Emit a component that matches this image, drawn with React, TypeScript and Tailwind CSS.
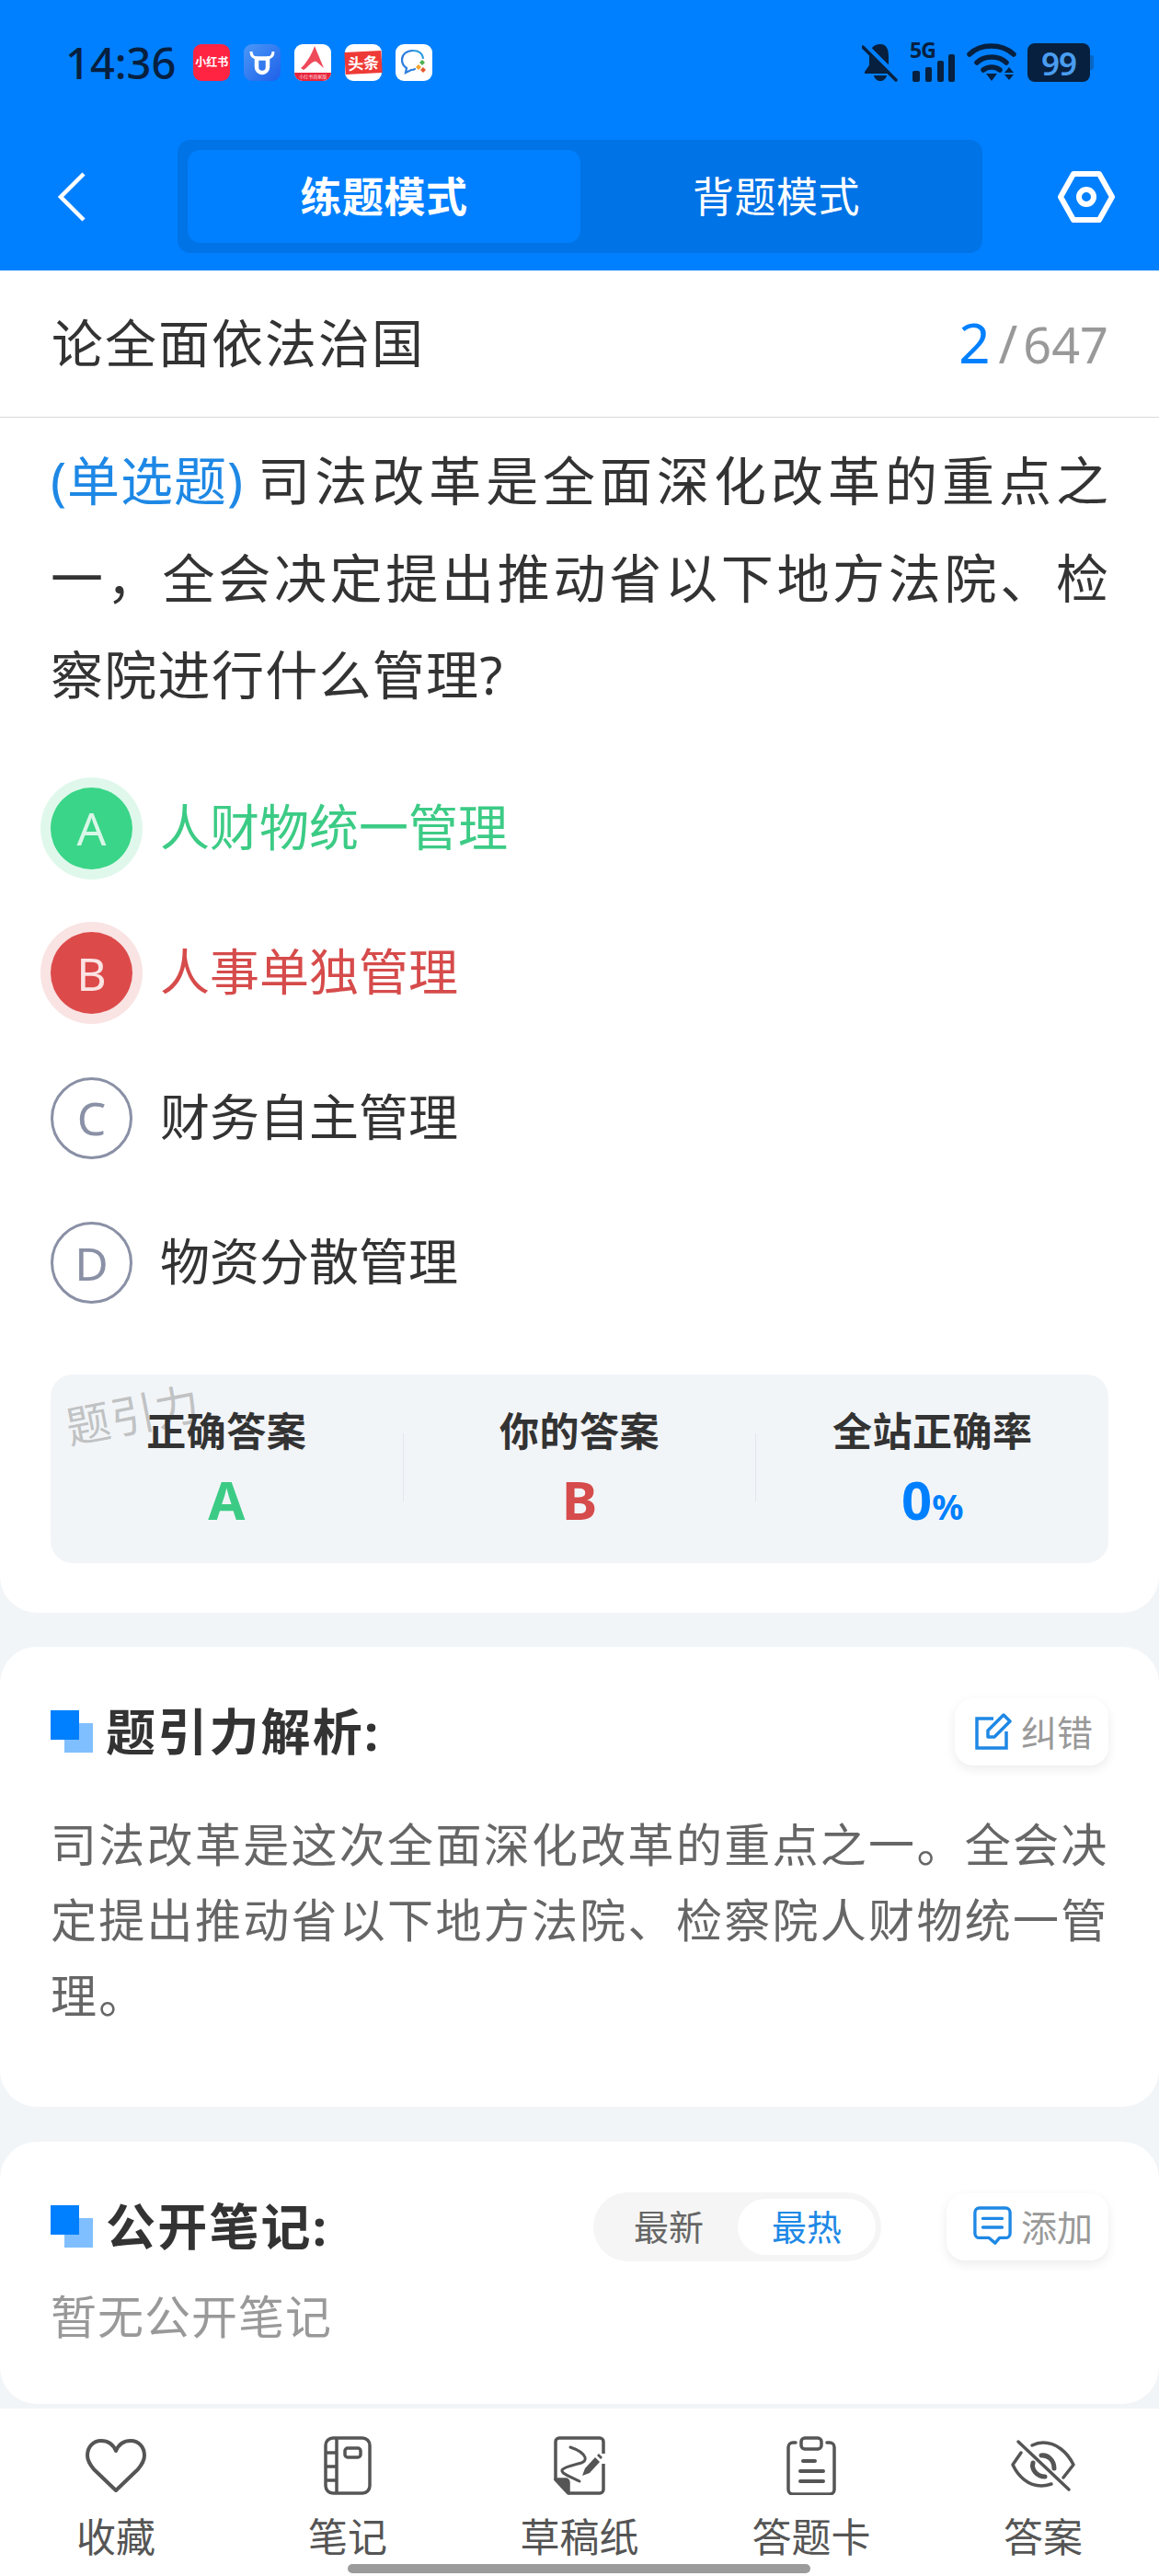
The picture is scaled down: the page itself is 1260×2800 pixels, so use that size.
const options = [
  { letter: "A", text: "人财物统一管理", state: "right" },
  { letter: "B", text: "人事单独管理", state: "wrong" },
  { letter: "C", text: "财务自主管理", state: "idle" },
  { letter: "D", text: "物资分散管理", state: "idle" },
];

function BellOff() {
  return (
    <svg width="40" height="42" viewBox="0 0 40 42" fill="#07203f">
      <path d="M20 1c-8 0-12 6-12 13v10l-5 7v2h31v-2l-5-7V14C29 7 27 1 20 1z" />
      <path d="M13 35h14c-1 4-4 6-7 6s-6-2-7-6z" />
      <path d="M3 1l37 37" stroke="#0080ff" strokeWidth="5" />
      <path d="M1 4l36 36" stroke="#07203f" strokeWidth="3.5" strokeLinecap="round" />
    </svg>
  );
}

function Signal() {
  return (
    <div className="relative h-[42px] w-[50px]">
      <span className="absolute left-0 top-[-5px] text-[23px] font-bold leading-[24px] tracking-[-1px] text-[#07203f]">5G</span>
      <svg className="absolute bottom-0 left-0" width="50" height="30" viewBox="0 0 50 30" fill="#07203f">
        <rect x="3" y="18" width="8" height="12" rx="2" />
        <rect x="17" y="14" width="7" height="16" rx="2" />
        <rect x="30" y="7" width="7" height="23" rx="2" />
        <rect x="42" y="0" width="7" height="30" rx="2" />
      </svg>
    </div>
  );
}

function Wifi() {
  return (
    <svg width="54" height="42" viewBox="0 0 54 42" fill="none" stroke="#07203f" strokeWidth="5.5" strokeLinecap="round">
      <path d="M3 12C15 0 38 0 51 12" />
      <path d="M11 21c8-8 24-8 32 0" />
      <path d="M18 29c5-4 13-4 18 0" />
      <path d="M21 33h12l-6 8z" fill="#07203f" stroke="none" />
      <path d="M46 26l5 6H41zM41 34h10l-5 6z" fill="#07203f" stroke="none" />
    </svg>
  );
}

function Battery() {
  return (
    <div className="flex items-center">
      <div className="flex h-[42px] w-[68px] items-center justify-center rounded-[8px] bg-[#07203f] text-[35px] font-semibold leading-none tracking-[-1px] text-[#4a9df0]">99</div>
      <div className="h-[16px] w-[4px] rounded-r-[3px] bg-[#0a66c4]" />
    </div>
  );
}

function AppIcons() {
  return (
    <div className="ml-[19px] flex items-center gap-[15px]">
      <div className="flex h-[40px] w-[40px] items-center justify-center rounded-[9px] bg-[#ff2442] text-[12px] font-bold leading-none text-white">小红书</div>
      <div className="flex h-[40px] w-[40px] items-center justify-center rounded-[9px] bg-gradient-to-br from-[#4c97f7] to-[#1f5fe8]">
        <svg width="28" height="28" viewBox="0 0 28 28" fill="none" stroke="#fff">
          <path d="M8 9.5h12V19a6 6 0 01-12 0z" strokeWidth="4.5" />
          <path d="M2 2c0 5 3 7 7 7M26 2c0 5-3 7-7 7" strokeWidth="3" />
        </svg>
      </div>
      <div className="relative h-[40px] w-[40px] overflow-hidden rounded-[9px] bg-white">
        <svg width="40" height="32" viewBox="0 0 40 32">
          <path d="M22 2l10 24-8-7c-4-2-8 5-14 9l-3-2c6-5 12-15 15-24z" fill="#ee4a5a" />
        </svg>
        <div className="absolute bottom-0 left-0 flex h-[9px] w-full items-center justify-center bg-[#e8243b] text-[5px] leading-none text-white/80">小红书商家版</div>
      </div>
      <div className="flex h-[40px] w-[40px] items-center rounded-[9px] bg-white">
        <div className="flex h-[24px] w-full -rotate-[3deg] items-center justify-center bg-[#ee3a36] text-[17px] font-bold leading-none text-white">头条</div>
      </div>
      <div className="flex h-[40px] w-[40px] items-center justify-center rounded-[9px] bg-white">
        <svg width="32" height="30" viewBox="0 0 32 30" fill="none">
          <path d="M15 2C8 2 3 6 3 12c0 4 2 7 5 9l-1 5 6-3c2 0 3 0 4-1" stroke="#2d7de0" strokeWidth="2.2" strokeLinecap="round" />
          <path d="M15 2c6 0 10 3 11 8" stroke="#2d9ce0" strokeWidth="2.2" strokeLinecap="round" />
          <path d="M25 12l3 3-3 3-3-3z" fill="#4cb050" />
          <path d="M21 17l3 3-3 3-3-3z" fill="#f2a32d" />
          <path d="M26 20l3 3-3 3-3-3z" fill="#e4572e" />
        </svg>
      </div>
    </div>
  );
}

function SectionTitle({ title }: { title: string }) {
  return (
    <div className="flex items-center">
      <div className="relative h-[46px] w-[46px] shrink-0">
        <div className="absolute bottom-0 right-0 h-[32px] w-[31px] bg-[#80bfff]" />
        <div className="absolute left-0 top-0 h-[32px] w-[31px] bg-[#0080ff]" />
      </div>
      <h2 className="ml-[14px] text-[54px] font-bold leading-[70px] tracking-[2.2px] text-[#333]">{title}</h2>
    </div>
  );
}

function ChipButton({ label, icon, wide }: { label: string; icon: React.ReactNode; wide?: boolean }) {
  return (
    <div className={"flex h-[73px] items-center rounded-[20px] bg-white pr-[17px] shadow-[0_4px_12px_rgba(0,0,0,0.08)] " + (wide ? "pl-[29px]" : "pl-[22px]")}>
      {icon}
      <span className="ml-[10px] text-[39px] leading-none text-[#999]">{label}</span>
    </div>
  );
}

function NavItem({ label, icon }: { label: string; icon: React.ReactNode }) {
  return (
    <div className="flex flex-col items-center">
      <div className="flex h-[68px] items-center justify-center">{icon}</div>
      <span className="mt-[19px] text-[43px] leading-[50px] text-[#555]">{label}</span>
    </div>
  );
}

export default function App() {
  return (
    <div className="relative flex h-[2800px] w-[1260px] flex-col overflow-hidden bg-[#f2f5f8] font-['Noto_Sans','Noto_Sans_CJK_SC',sans-serif]">
      <header className="h-[294px] shrink-0 bg-[#0080ff]">
        <div className="flex h-[136px] items-center justify-between pl-[71px] pr-[71px]">
          <div className="flex items-center">
            <span className="text-[47px] font-medium leading-none text-[#07203f]">14:36</span>
            <AppIcons />
          </div>
          <div className="flex items-center gap-[12px]">
            <BellOff />
            <Signal />
            <Wifi />
            <Battery />
          </div>
        </div>
        <div className="mt-[16px] flex items-center justify-between pl-[62px] pr-[48px]">
          <svg width="32" height="54" viewBox="0 0 32 54" fill="none" stroke="#fff" strokeWidth="4.5">
            <path d="M29 2L4 27l25 25" />
          </svg>
          <div className="ml-[99px] flex h-[123px] w-[875px] items-center rounded-[14px] bg-[#0073e6] px-[11px]">
            <div className="flex h-[101px] w-[427px] items-center justify-center rounded-[14px] bg-[#0080ff] text-[45px] font-bold tracking-[0.5px] text-white">练题模式</div>
            <div className="flex h-[101px] flex-1 items-center justify-center text-[45px] tracking-[0.5px] text-white">背题模式</div>
          </div>
          <svg className="ml-[82px]" width="62" height="56" viewBox="0 0 62 56" fill="none" stroke="#fff" strokeWidth="6" strokeLinejoin="round">
            <path d="M17 3h28l14 25-14 25H17L3 28z" />
            <circle cx="31" cy="28" r="8" />
          </svg>
        </div>
      </header>

      <main className="flex-1">
        <div className="flex h-[160px] items-center justify-between border-b border-[#d9d9d9] bg-white pb-[3px] pl-[56px] pr-[55px]">
          <h1 className="text-[56px] leading-none tracking-[2px] text-[#333]">论全面依法治国</h1>
          <div className="flex items-baseline text-[#999]">
            <span className="text-[60px] leading-none text-[#0080ff]">2</span>
            <span className="ml-[9px] text-[56px] leading-none">/</span>
            <span className="ml-[6px] text-[54px] leading-none">647</span>
          </div>
        </div>

        <section className="rounded-b-[40px] bg-white pb-[54px] pl-[55px] pr-[55px] pt-[16px]">
          {/* the app justifies these lines, so the breaks are set by hand */}
          <p className="text-[57px] leading-[105.5px] text-[#333]">
            <span className="block text-justify [text-align-last:justify]">
              <span className="mr-[10px] inline-block tracking-[1px] text-[#1e88e5]">(单选题)</span>司法改革是全面深化改革的重点之
            </span>
            <span className="block text-justify [text-align-last:justify]">一，全会决定提出推动省以下地方法院、检</span>
            <span className="block tracking-[1.3px]">察院进行什么管理?</span>
          </p>

          <div className="mt-[35px] flex flex-col">
            {options.map((o) => (
              <div key={o.letter} className="flex h-[157.5px] items-center">
                {o.state === "right" && (
                  <div className="flex h-[89px] w-[89px] items-center justify-center rounded-full bg-[#3ad588] text-[50px] leading-none text-[#d9f7e8] shadow-[0_0_0_11px_#e0f8ec]">{o.letter}</div>
                )}
                {o.state === "wrong" && (
                  <div className="flex h-[89px] w-[89px] items-center justify-center rounded-full bg-[#dd4a4a] text-[50px] leading-none text-[#fbe3e3] shadow-[0_0_0_11px_#f9e3e3]">{o.letter}</div>
                )}
                {o.state === "idle" && (
                  <div className="flex h-[89px] w-[89px] items-center justify-center rounded-full border-[3px] border-[#8a90a5] text-[50px] leading-none text-[#8a90a5]">{o.letter}</div>
                )}
                <span
                  className={
                    "ml-[30px] pb-[3px] text-[54px] leading-none " +
                    (o.state === "right" ? "text-[#3ccb85]" : o.state === "wrong" ? "text-[#d64b4b]" : "text-[#333]")
                  }
                >
                  {o.text}
                </span>
              </div>
            ))}
          </div>

          <div className="relative mt-[42px] flex h-[205px] rounded-[24px] bg-[#f2f5f8]">
            <span className="absolute left-[16px] top-[20px] -rotate-[11deg] text-[48px] leading-none tracking-[1px] text-[#8f8f8f]/50">题引力</span>
            <div className="relative flex flex-1 flex-col items-center pt-[36px]">
              <span className="text-[43px] font-bold leading-[52px] tracking-[0.5px] text-[#333]">正确答案</span>
              <span className="mt-[16px] text-[58px] font-bold leading-[64px] text-[#3ccb85]">A</span>
            </div>
            <div className="mt-[64px] h-[74px] w-px bg-[#e3e6ea]" />
            <div className="flex flex-1 flex-col items-center pt-[36px]">
              <span className="text-[43px] font-bold leading-[52px] tracking-[0.5px] text-[#333]">你的答案</span>
              <span className="mt-[16px] text-[58px] font-bold leading-[64px] text-[#d64b4b]">B</span>
            </div>
            <div className="mt-[64px] h-[74px] w-px bg-[#e3e6ea]" />
            <div className="flex flex-1 flex-col items-center pt-[36px]">
              <span className="text-[43px] font-bold leading-[52px] tracking-[0.5px] text-[#333]">全站正确率</span>
              <span className="mt-[16px] text-[58px] font-bold leading-[64px] text-[#0080ff]">
                0<span className="text-[38px]">%</span>
              </span>
            </div>
          </div>
        </section>

        <section className="mt-[37px] h-[500px] rounded-[40px] bg-white pl-[55px] pr-[55px] pt-[56px]">
          <div className="flex items-center justify-between">
            <SectionTitle title="题引力解析:" />
            <ChipButton
              label="纠错"
              icon={
                <svg width="40" height="40" viewBox="0 0 40 40" fill="none" stroke="#1e88e5" strokeWidth="3.5">
                  <path d="M20 6H2v32h32V20" />
                  <path d="M14 26v-7L31 2l7 7-17 17z" strokeLinejoin="round" />
                </svg>
              }
            />
          </div>
          <p className="-mr-[4px] mt-[45px] text-[50px] leading-[82px] tracking-[2.3px] text-[#666]">
            司法改革是这次全面深化改革的重点之一。全会决定提出推动省以下地方法院、检察院人财物统一管理。
          </p>
        </section>

        <section className="mt-[38px] h-[285px] rounded-[40px] bg-white pl-[55px] pr-[55px] pt-[55px]">
          <div className="flex h-[75px] items-center">
            <SectionTitle title="公开笔记:" />
            <div className="ml-auto flex h-[75px] w-[313px] items-center rounded-full bg-[#f5f5f5] pl-[44px] pr-[6px]">
              <span className="text-[38px] leading-none text-[#666]">最新</span>
              <div className="ml-auto flex h-[61px] w-[150px] items-center justify-center rounded-full bg-white text-[38px] leading-none text-[#1e88e5]">最热</div>
            </div>
            <div className="ml-[71px]">
              <ChipButton
                wide
                label="添加"
                icon={
                  <svg width="42" height="46" viewBox="0 0 44 46" fill="none" stroke="#1e88e5" strokeWidth="3.5" strokeLinecap="round">
                    <path d="M7 2h30a5 5 0 015 5v24a5 5 0 01-5 5H30l-5 6-7-6H7a5 5 0 01-5-5V7a5 5 0 015-5z" strokeLinejoin="round" />
                    <path d="M11 14h22M11 24h22" />
                  </svg>
                }
              />
            </div>
          </div>
          <p className="mt-[25px] text-[50px] leading-[70px] tracking-[1px] text-[#999]">暂无公开笔记</p>
        </section>
      </main>

      <nav className="grid h-[182px] shrink-0 grid-cols-5 bg-white pt-[28px]">
        <NavItem
          label="收藏"
          icon={
            <svg width="66" height="58" viewBox="0 0 66 58" fill="none" stroke="#555" strokeWidth="4" strokeLinejoin="round">
              <path d="M33 13C30 6 24 2 17 2 8 2 2 9 2 18c0 6 3 10 7 15l24 23 24-23c4-5 7-9 7-15 0-9-6-16-15-16-7 0-13 4-16 11z" />
            </svg>
          }
        />
        <NavItem
          label="笔记"
          icon={
            <svg width="52" height="64" viewBox="0 0 52 64" fill="none" stroke="#555" strokeWidth="3.5">
              <rect x="2" y="2" width="48" height="60" rx="8" />
              <path d="M14 2v60M2 18h12M2 33h12M2 48h12" />
              <rect x="23" y="13" width="17" height="10" rx="3" />
            </svg>
          }
        />
        <NavItem
          label="草稿纸"
          icon={
            <svg width="56" height="64" viewBox="0 0 56 64" fill="none" stroke="#555" strokeWidth="3.5" strokeLinejoin="round">
              <path d="M16 62h34a4 4 0 004-4V30M54 19V6a4 4 0 00-4-4H6a4 4 0 00-4 4v41l14 15" />
              <path d="M2 47h11a3 3 0 013 3v12z" fill="#555" />
              <path d="M18 12c6 2 14 6 16 11 1 3-1 5-4 6-7 2-20 5-21 8-1 4 11 8 19 12" strokeWidth="3" strokeLinecap="round" />
              <path d="M31 43l3-8 11-12 5 5-11 12z" fill="#555" stroke="none" />
              <path d="M47 21l2-2 4 4-2 2z" fill="#555" stroke="none" />
            </svg>
          }
        />
        <NavItem
          label="答题卡"
          icon={
            <svg width="56" height="64" viewBox="0 0 56 64" fill="none" stroke="#555" strokeWidth="3.5" strokeLinecap="round">
              <path d="M11 7H8a5 5 0 00-5 5v46a5 5 0 005 5h40a5 5 0 005-5V12a5 5 0 00-5-5h-3" />
              <rect x="17" y="2" width="22" height="12" rx="4" />
              <path d="M19 27h13M16 38h25M16 49h25" strokeWidth="4" />
            </svg>
          }
        />
        <NavItem
          label="答案"
          icon={
            <svg width="74" height="60" viewBox="8 9 74 60" fill="none" stroke="#555" strokeWidth="3.5" strokeLinecap="round" strokeLinejoin="round">
              <path d="M18 13l55 52" />
              <path d="M21 25l-9 13c6 13 17 23 31 23 4 0 8-1 11-2" />
              <path d="M33 17c4-2 8-3 12-3 14 0 26 10 33 24l-11 14" />
              <path d="M34 36c-2 7 4 15 13 15" strokeWidth="5" />
              <path d="M43 28c7-1 14 5 14 14" strokeWidth="5" />
            </svg>
          }
        />
      </nav>

      <div className="absolute bottom-[3px] left-[378px] h-[10px] w-[503px] rounded-full bg-[#9b9b9b]" />
    </div>
  );
}
